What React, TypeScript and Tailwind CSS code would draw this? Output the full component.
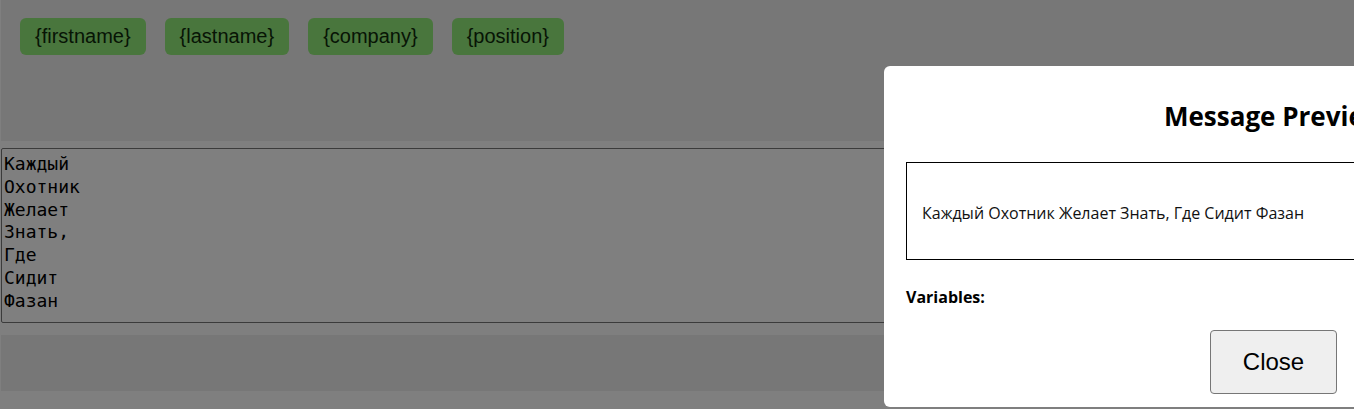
import React from "react";

const chips = ["{firstname}", "{lastname}", "{company}", "{position}"];

const text = "Каждый\nОхотник\nЖелает\nЗнать,\nГде\nСидит\nФазан";

export default function App() {
  return (
    <div className="relative h-[409px] w-full overflow-hidden bg-white pl-[1px]">
      <div className="flex h-[141px] items-start gap-[19px] bg-[#eeeeee] pl-[19px] pt-[18px]">
        {chips.map((c) => (
          <span
            key={c}
            className="rounded-[6px] bg-[#92ec7a] px-[15px] py-[7px] text-[20px] leading-[23px] text-[#0e2a0a] [font-family:'Liberation_Sans',Arial,sans-serif]"
          >
            {c}
          </span>
        ))}
      </div>
      <div className="h-[7px]" />
      <textarea
        readOnly
        defaultValue={text}
        className="block h-[175px] w-[1352px] resize-none rounded-[2px] border border-[#767676] bg-white px-[2px] pt-[4px] text-[18px] leading-[22.8px] text-black outline-none [font-family:'DejaVu_Sans_Mono',monospace]"
      />
      <div className="h-[12px]" />
      <div className="h-[56px] bg-[#eeeeee]" />

      <div className="absolute inset-0 bg-black/50">
        <div className="absolute left-[884px] top-[66px] flex h-[341px] w-[782px] flex-col rounded-[6px] bg-white px-[22px] pt-[32px] [font-family:'Open_Sans',sans-serif]">
          <h2 className="text-center text-[26px] font-bold leading-[36px] text-black">
            Message Preview
          </h2>
          <div className="mt-[28px] flex h-[98px] items-center border border-black px-[15px] pt-[3px] text-[16px] text-[#111]">
            Каждый Охотник Желает Знать, Где Сидит Фазан
          </div>
          <div className="mt-[26px] text-[16px] font-bold leading-[22px] text-black">
            Variables:
          </div>
          <div className="mt-[22px] flex">
            <button className="ml-[304px] h-[64px] w-[127px] rounded-[4px] border border-[#767676] bg-[#efefef] text-[24px] text-black [font-family:'Liberation_Sans',Arial,sans-serif]">
              Close
            </button>
          </div>
        </div>
      </div>
    </div>
  );
}
